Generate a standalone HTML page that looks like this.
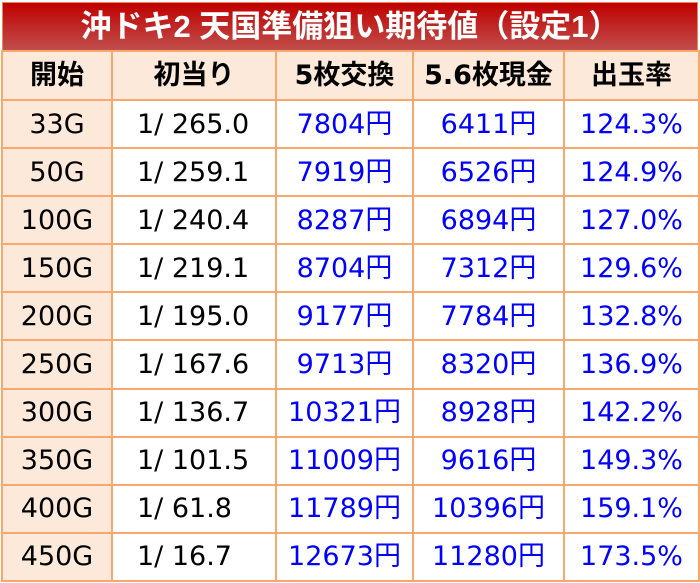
<!DOCTYPE html>
<html><head><meta charset="utf-8"><style>
body{margin:0;background:#fff;width:700px;height:583px;overflow:hidden}
.t{position:absolute;left:2px;top:2px;width:696px;height:49px;background:linear-gradient(#c00000,#c0504d);color:#fff;font-weight:bold;font-size:31px;font-family:"Liberation Sans","Noto Sans CJK JP",sans-serif;text-align:center;line-height:47px;box-sizing:border-box;border:1px solid #e8885a;border-bottom:none}
table{position:absolute;left:1px;top:50px;border-collapse:collapse;table-layout:fixed}
tr{height:48.1px}
tr.h{height:49px}
td{border:2px solid #f7a96d;padding:0;text-align:center;font-size:27px;line-height:1;font-family:"DejaVu Sans","Noto Sans CJK JP",sans-serif;color:#000;vertical-align:middle}
tr.h td{background:#fde9d9;font-weight:bold;font-size:27px}
td.g{background:#fde9d9}
td.b{color:#0000ff}
td.l{text-align:left;padding-left:24px}
</style></head><body>
<div class="t">沖ドキ2 天国準備狙い期待値（設定1）</div>
<table>
<colgroup><col style="width:110px"><col style="width:164px"><col style="width:137px"><col style="width:151px"><col style="width:135px"></colgroup>
<tr class="h"><td>開始</td><td>初当り</td><td>5枚交換</td><td>5.6枚現金</td><td>出玉率</td></tr>
<tr><td class="g">33G</td><td class="l">1/ 265.0</td><td class="b">7804円</td><td class="b">6411円</td><td class="b">124.3%</td></tr>
<tr><td class="g">50G</td><td class="l">1/ 259.1</td><td class="b">7919円</td><td class="b">6526円</td><td class="b">124.9%</td></tr>
<tr><td class="g">100G</td><td class="l">1/ 240.4</td><td class="b">8287円</td><td class="b">6894円</td><td class="b">127.0%</td></tr>
<tr><td class="g">150G</td><td class="l">1/ 219.1</td><td class="b">8704円</td><td class="b">7312円</td><td class="b">129.6%</td></tr>
<tr><td class="g">200G</td><td class="l">1/ 195.0</td><td class="b">9177円</td><td class="b">7784円</td><td class="b">132.8%</td></tr>
<tr><td class="g">250G</td><td class="l">1/ 167.6</td><td class="b">9713円</td><td class="b">8320円</td><td class="b">136.9%</td></tr>
<tr><td class="g">300G</td><td class="l">1/ 136.7</td><td class="b">10321円</td><td class="b">8928円</td><td class="b">142.2%</td></tr>
<tr><td class="g">350G</td><td class="l">1/ 101.5</td><td class="b">11009円</td><td class="b">9616円</td><td class="b">149.3%</td></tr>
<tr><td class="g">400G</td><td class="l">1/ 61.8</td><td class="b">11789円</td><td class="b">10396円</td><td class="b">159.1%</td></tr>
<tr><td class="g">450G</td><td class="l">1/ 16.7</td><td class="b">12673円</td><td class="b">11280円</td><td class="b">173.5%</td></tr>
</table>
</body></html>
